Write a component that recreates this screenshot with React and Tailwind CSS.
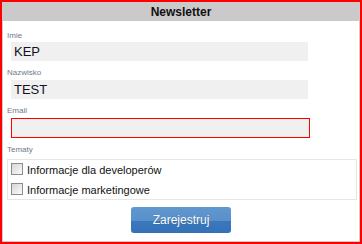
export default function App() {
  const font = { fontFamily: '"Liberation Sans", Arial, sans-serif' };

  const Label = ({ children, className }) => (
    <div className={`flex items-end pl-[4px] text-[8px] leading-[9px] text-[#6f7a8c] ${className}`}>
      {children}
    </div>
  );

  const Check = ({ label }) => (
    <div className="flex h-[20px] pl-[3px]">
      <div className="mt-[3px] h-[12px] w-[12px] shrink-0 border border-[#8c8c8c] bg-gradient-to-br from-[#d6d6d6] to-[#fbfbfb]" />
      <span className="pl-[4px] pt-[1px] text-[11px] leading-[19px] text-[#111]">{label}</span>
    </div>
  );

  return (
    <div style={font} className="h-[244px] w-[362px] border-2 border-[#ff0000] bg-white">
      <div className="flex h-full flex-col border border-[#cccccc]">
        {/* Header */}
        <div className="h-[18px] bg-[#cbc9c9] text-center text-[12px] font-bold leading-[19px] text-[#111]">
          Newsletter
        </div>

        <Label className="h-[21px] pb-[2px]">Imie</Label>
        <div className="ml-[8px] h-[19px] w-[297px] bg-[#f0f0f0] pl-[3px] text-[13px] leading-[19px] text-[#14101f]">
          KEP
        </div>

        <Label className="h-[19px] pb-[3px]">Nazwisko</Label>
        <div className="ml-[8px] h-[19px] w-[297px] bg-[#f0f0f0] pl-[3px] text-[13px] leading-[19px] text-[#14101f]">
          TEST
        </div>

        <Label className="h-[19px] pb-[3px]">Email</Label>
        <div className="ml-[8px] h-[20px] w-[299px] border border-[#ff0000] bg-[#f0f0f0]" />

        <Label className="h-[21px] pb-[5px]">Tematy</Label>
        <div className="ml-[4px] h-[41px] w-[350px] border border-[#e6e6e6]">
          <Check label="Informacje dla developerów" />
          <Check label="Informacje marketingowe" />
        </div>

        <div className="mt-[7px] flex justify-center">
          <button className="h-[26px] w-[100px] rounded-[3px] bg-[linear-gradient(to_bottom,#6097cf_0%,#5a90ca_54%,#3a77bb_55%,#3471b7_100%)] text-[12px] text-white [text-shadow:0_0_1px_rgba(0,0,0,0.3)]">
            Zarejestruj
          </button>
        </div>
      </div>
    </div>
  );
}
